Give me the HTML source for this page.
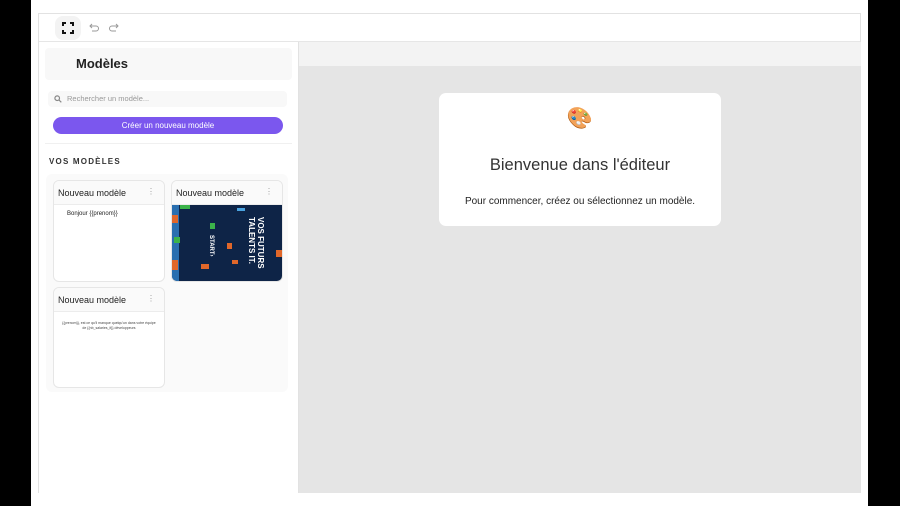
<!DOCTYPE html>
<html><head><meta charset="utf-8"><style>
*{box-sizing:border-box;margin:0;padding:0}
body{width:900px;height:506px;background:#fff;font-family:"Liberation Sans",sans-serif;position:relative;overflow:hidden;color:#222}
.blk{position:absolute;background:#000;top:0;height:506px}
.frame{position:absolute;left:38px;top:13px;width:823px;height:480px;border:1px solid #e2e2e2;background:#fff}
.tb{position:absolute;left:0;top:0;width:821px;height:28px;border-bottom:1px solid #e6e6e6;background:#fff}
.side{position:absolute;left:0;top:28px;width:260px;height:451px;background:#fff;border-right:1px solid #e2e2e2}
.main{position:absolute;left:260px;top:28px;width:562px;height:451px;background:#e5e5e5}
.card{position:absolute;background:#fff;border:1px solid #e6e6e6;border-radius:6px;overflow:hidden}
.ch{height:24px;border-bottom:1px solid #ececec;background:#fafafa;font-size:9px;padding:7px 0 0 4px;position:relative}
.dots{position:absolute;right:9px;top:6px;font-size:8px;color:#999}
</style></head><body>
<div class="blk" style="left:0;width:31px"></div>
<div class="blk" style="left:868px;width:32px"></div>
<div class="frame">
 <div class="tb">
  <div style="position:absolute;left:16px;top:2px;width:26px;height:24px;border-radius:8px;background:#f3f3f3"></div>
  <svg style="position:absolute;left:23px;top:8px" width="12" height="12" viewBox="0 0 12 12" fill="none" stroke="#111" stroke-width="2"><path d="M1 4V1h3M8 1h3v3M11 8v3H8M4 11H1V8"/></svg>
  <svg style="position:absolute;left:50px;top:8px" width="30" height="10" viewBox="0 0 30 10" fill="none" stroke="#999" stroke-width="1"><path d="M3 2L1 4l2 2M1 4h6a2.5 2.5 0 010 5H3"/><path d="M27 2l2 2-2 2M29 4h-6a2.5 2.5 0 000 5h4"/></svg>
 </div>
 <div class="side">
  <div style="position:absolute;left:6px;top:6px;width:247px;height:32px;background:#f8f8f8;border-radius:4px;font-size:13px;font-weight:bold;color:#222;padding:8px 0 0 31px">Modèles</div>
  <div style="position:absolute;left:9px;top:49px;width:239px;height:16px;background:#f8f8f8;border-radius:4px;font-size:7.5px;color:#999;padding:3px 0 0 19px">Rechercher un modèle...</div>
  <svg style="position:absolute;left:15px;top:53px" width="8" height="8" viewBox="0 0 8 8" fill="none" stroke="#888" stroke-width="1.2"><circle cx="3.2" cy="3.2" r="2.3"/><path d="M5 5l2.3 2.3"/></svg>
  <div style="position:absolute;left:14px;top:75px;width:230px;height:17px;background:#7b57ee;border-radius:9px;color:#fff;font-size:8px;text-align:center;padding-top:4px">Créer un nouveau modèle</div>
  <div style="position:absolute;left:6px;top:101px;width:247px;height:1px;background:#f0f0f0"></div>
  <div style="position:absolute;left:10px;top:115px;font-size:8px;font-weight:bold;letter-spacing:1.2px;color:#333">VOS MODÈLES</div>
  <div style="position:absolute;left:7px;top:132px;width:242px;height:218px;background:#fafafa;border-radius:6px"></div>
  <div class="card" style="left:14px;top:138px;width:112px;height:102px"><div class="ch">Nouveau modèle<span class="dots">⋮</span></div><div style="font-size:6px;padding:6px 0 0 13px">Bonjour {{prenom}}</div></div>
  <div class="card" style="left:132px;top:138px;width:112px;height:102px"><div class="ch">Nouveau modèle<span class="dots">⋮</span></div>
   <svg width="112" height="77" viewBox="0 0 112 77"><rect width="112" height="77" fill="#0e2447"/><rect x="0" y="0" width="7" height="77" fill="#2a6fb0"/><rect x="0" y="10" width="6" height="8" fill="#e0672a"/><rect x="2" y="32" width="6" height="6" fill="#3bb34a"/><rect x="0" y="55" width="6" height="10" fill="#e0672a"/><rect x="8" y="0" width="10" height="4" fill="#3bb34a"/><rect x="38" y="18" width="5" height="6" fill="#3bb34a"/><rect x="55" y="38" width="5" height="6" fill="#e0672a"/><rect x="29" y="59" width="8" height="5" fill="#e0672a"/><rect x="60" y="55" width="6" height="4" fill="#e0672a"/><rect x="65" y="3" width="8" height="3" fill="#4aa3e0"/><rect x="104" y="45" width="6" height="7" fill="#e0672a"/><text x="0" y="0" transform="translate(86,12) rotate(90)" fill="#fff" font-size="8" font-weight="bold" font-family="Liberation Sans">VOS FUTURS</text><text x="0" y="0" transform="translate(77,12) rotate(90)" fill="#fff" font-size="8" font-weight="bold" font-family="Liberation Sans">TALENTS IT.</text><text x="0" y="0" transform="translate(38,30) rotate(90)" fill="#fff" font-size="6" font-weight="bold" font-family="Liberation Sans">START›</text></svg>
  </div>
  <div class="card" style="left:14px;top:245px;width:112px;height:101px"><div class="ch">Nouveau modèle<span class="dots">⋮</span></div><div style="font-size:3.5px;text-align:center;padding:9px 6px 0;color:#444;line-height:5px">{{prenom}}, est ce qu'il manque quelqu'un dans votre équipe de {{nb_salaries_it}} développeurs</div></div>
 </div>
 <div class="main">
  <div style="position:absolute;left:0;top:0;width:562px;height:24px;background:#f3f3f3"></div>
  <div style="position:absolute;left:140px;top:51px;width:282px;height:133px;background:#fff;border-radius:7px;text-align:center">
   <div style="font-size:21px;padding-top:14px;height:48px;line-height:24px">🎨</div>
   <div style="font-size:16.5px;color:#333;padding-top:15px">Bienvenue dans l'éditeur</div>
   <div style="font-size:10px;color:#222;padding-top:21px">Pour commencer, créez ou sélectionnez un modèle.</div>
  </div>
 </div>
</div>
</body></html>
